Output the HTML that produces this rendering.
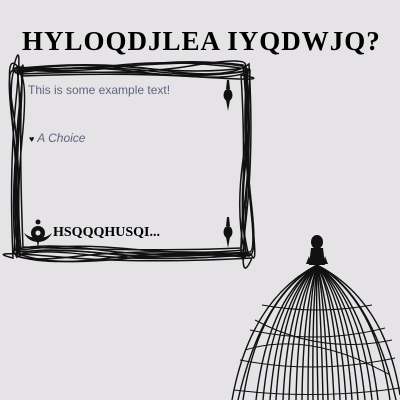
<!DOCTYPE html>
<html><head><style>
html,body{margin:0;padding:0;width:400px;height:400px;background:#e5e3e6;overflow:hidden}
.t{position:absolute;font-family:"Liberation Serif",serif;font-weight:bold;color:#000}
</style></head><body>
<div class="t" style="left:22px;top:26px;font-size:27px;letter-spacing:1px;white-space:nowrap">HYLOQDJLEA IYQDWJQ?</div>
<svg width="400" height="400" style="position:absolute;left:0;top:0" fill="none" stroke="#111">
<g stroke-width="1.5">
<path d="M17 70 Q80 62 140 68 T245 68 Q252 110 246 160 T246 254 Q180 262 120 255 T18 252 Q12 200 17 150 T17 70Z"/>
<path d="M15 68 Q70 74 130 66 T243 65 Q249 120 244 170 T249 256 Q170 250 110 258 T16 256 Q20 200 14 140 T15 68Z"/>
<path d="M19 72 Q90 64 150 71 T247 71 Q242 130 249 190 T250 252 Q160 258 100 250 T15 250 Q11 190 18 130 T19 72Z"/>
<path d="M14 71 Q100 67 160 64 T246 67 Q253 130 245 200 T245 257 Q190 252 120 259 T19 254 Q14 190 20 120 T14 71Z"/>
<path d="M18 67 Q60 71 120 65 T248 69 Q244 140 251 200 T248 255 Q150 262 90 255 T17 257 Q22 170 13 110 T18 67Z"/>
<path d="M20 74 Q110 70 170 75 T244 73 Q250 110 243 160 T244 250 Q190 255 130 249 T21 250 Q16 200 22 140 T20 74Z"/>
<path d="M16 73 Q80 64 140 72 T250 70 Q246 170 252 220 T251 254 Q140 249 80 256 T14 253 Q19 180 12 120 T16 73Z"/>
<path d="M21 70 Q130 76 190 66 T245 66 Q251 140 247 190 T246 252 Q170 260 100 253 T20 255 Q12 170 19 110 T21 70Z"/>
<path d="M13 69 Q90 60 160 70 T249 64 Q254 150 246 220 T252 258 Q140 264 60 257 T13 258 Q9 170 16 100 T13 69Z"/>
<path d="M22 76 Q120 72 200 77 T241 75 Q246 150 241 248 Q150 252 23 247 Q19 150 22 76Z"/>
</g>
<g fill="#111" stroke="none">
<ellipse cx="228" cy="95" rx="4.5" ry="6"/><path d="M227 80h2l1 9h-4zM226 100h4l-2 11z"/>
<ellipse cx="228" cy="232" rx="4.5" ry="6"/><path d="M227 217h2l1 9h-4zM226 237h4l-2 11z"/>
<circle cx="38" cy="233" r="7"/><path d="M24 233q7 6 14 4q7 2 14-4q-4 8-13 9l-1 6l-1-6q-9-1-13-9z"/>
<circle cx="38" cy="222" r="2.5"/>
</g>
<circle cx="38" cy="233" r="3" fill="#e5e3e6"/>
<g stroke-width="1.4">
<path d="M317 265 Q250 300 232 400"/><path d="M317 265 Q258 300 243 400"/>
<path d="M317 265 Q268 300 256 400"/><path d="M317 265 Q278 300 270 400"/>
<path d="M317 265 Q288 300 283 400"/><path d="M317 265 Q298 300 296 400"/>
<path d="M317 265 Q308 300 308 400"/><path d="M317 265 Q316 300 318 400"/>
<path d="M317 265 Q325 300 328 400"/><path d="M317 265 Q335 300 340 400"/>
<path d="M317 265 Q345 300 352 400"/><path d="M317 265 Q355 300 365 400"/>
<path d="M317 265 Q366 300 378 400"/><path d="M317 265 Q376 300 390 400"/>
<path d="M317 265 Q385 300 400 395"/><path d="M317 265 Q262 295 238 400"/>
<path d="M317 265 Q372 295 396 400"/><path d="M317 265 Q303 310 302 400"/>
<path d="M317 265 Q330 310 334 400"/><path d="M317 265 Q292 305 289 400"/>
<path d="M317 265 Q340 305 346 400"/><path d="M317 265 Q282 300 276 400"/>
<path d="M317 265 Q350 300 358 400"/><path d="M317 265 Q312 310 313 400"/>
<path d="M317 265 Q321 310 323 400"/><path d="M317 265 Q272 300 263 400"/>
<path d="M317 265 Q361 300 372 400"/>
</g>
<g stroke-width="1">
<path d="M262 305 Q317 315 372 305"/><path d="M250 330 Q317 345 385 328"/>
<path d="M240 360 Q317 375 395 358"/><path d="M234 390 Q317 400 400 388"/>
<path d="M255 320 Q320 355 392 340"/><path d="M245 350 Q310 330 390 375"/>
</g>
<g fill="#111" stroke="none">
<ellipse cx="317" cy="242" rx="6" ry="7"/><path d="M311 248h12l2 17h-16z"/>
<path d="M309 256l-3 8h5zM325 256l3 8h-5z"/>
</g>
</svg>
<div style="position:absolute;left:28px;top:83px;font-family:'Liberation Sans',sans-serif;font-size:12px;color:#5c6680">This is some example text!</div>
<div style="position:absolute;left:29px;top:131px;font-family:'Liberation Sans',sans-serif;font-size:12px;color:#5c6680;font-style:italic"><span style="color:#111;font-style:normal;font-size:9px">&#9829;</span> A Choice</div>
<div class="t" style="left:53px;top:225px;font-size:14px;white-space:nowrap">HSQQQHUSQI...</div>
</body></html>
